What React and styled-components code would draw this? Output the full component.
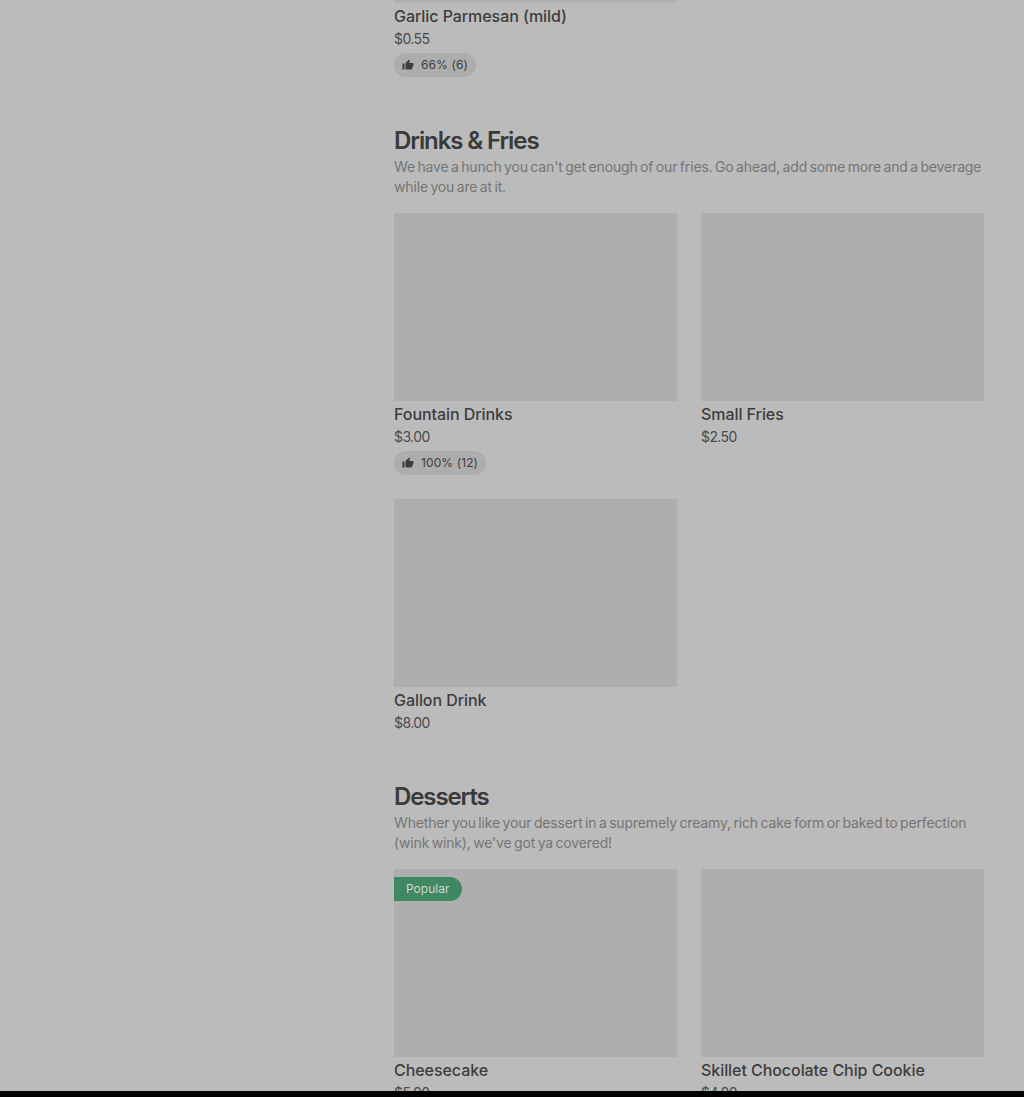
import React from "react";
import styled, { createGlobalStyle } from "styled-components";
import { MdThumbUp } from "react-icons/md";

const sections = [
  {
    title: "Drinks & Fries",
    text: "We have a hunch you can't get enough of our fries. Go ahead, add some more and a beverage while you are at it.",
    items: [
      { name: "Fountain Drinks", price: "$3.00", rating: "100% (12)" },
      { name: "Small Fries", price: "$2.50" },
      { name: "Gallon Drink", price: "$8.00" },
    ],
  },
  {
    title: "Desserts",
    text: "Whether you like your dessert in a supremely creamy, rich cake form or baked to perfection (wink wink), we've got ya covered!",
    items: [
      { name: "Cheesecake", price: "$5.00", popular: true },
      { name: "Skillet Chocolate Chip Cookie", price: "$4.00" },
    ],
  },
];

function Rating({ value }) {
  return (
    <RatingPill>
      <MdThumbUp size={12} />
      <span>{value}</span>
    </RatingPill>
  );
}

function MenuItem({ item }) {
  return (
    <Card>
      <Photo>{item.popular && <Badge>Popular</Badge>}</Photo>
      <Name>{item.name}</Name>
      <Price>{item.price}</Price>
      {item.rating && <Rating value={item.rating} />}
    </Card>
  );
}

export default function App() {
  return (
    <>
      <GlobalStyle />
      <Page>
        <Menu>
          <Card>
            <PhotoEdge />
            <Name>Garlic Parmesan (mild)</Name>
            <Price>$0.55</Price>
            <Rating value="66% (6)" />
          </Card>
          {sections.map((section) => (
            <Section key={section.title}>
              <Heading>{section.title}</Heading>
              <Description>{section.text}</Description>
              <Grid>
                {section.items.map((item) => (
                  <MenuItem key={item.name} item={item} />
                ))}
              </Grid>
            </Section>
          ))}
        </Menu>
      </Page>
      <BottomBar />
    </>
  );
}

const GlobalStyle = createGlobalStyle`
  html, body {
    margin: 0;
    height: 100%;
    overflow: hidden;
    background: #bbbbbb;
  }
  body {
    font-family: Inter, "Liberation Sans", sans-serif;
  }
`;

const Page = styled.main`
  height: 1091px;
  overflow: hidden;
  padding: 0 40px 0 394px;
  background: #bbbbbb;
`;

const Menu = styled.div`
  width: 590px;
`;

const BottomBar = styled.div`
  height: 6px;
  background: #000;
`;

const Section = styled.section`
  margin-top: 48px;
`;

const Heading = styled.h2`
  margin: 0;
  font-size: 24px;
  line-height: 32px;
  font-weight: 600;
  letter-spacing: -1.1px;
  color: #3a3a3a;
`;

const Description = styled.p`
  margin: 0 0 16px;
  font-size: 14px;
  line-height: 20px;
  letter-spacing: -0.15px;
  word-spacing: -1.3px;
  color: #757575;
`;

const Grid = styled.div`
  display: grid;
  grid-template-columns: 283px 283px;
  column-gap: 24px;
  row-gap: 24px;
`;

const Card = styled.article`
  display: flex;
  flex-direction: column;
  align-items: flex-start;
  min-width: 0;
`;

const Photo = styled.div`
  position: relative;
  width: 100%;
  height: 188px;
  background: #aeaeae;
`;

const PhotoEdge = styled.div`
  width: 283px;
  height: 1px;
  margin-bottom: 2px;
  background: #aeaeae;
  box-shadow: 0 1px 2px rgba(0, 0, 0, 0.12);
`;

const Badge = styled.span`
  position: absolute;
  top: 8px;
  left: 0;
  height: 24px;
  padding: 0 13px 0 12px;
  border-radius: 0 12px 12px 0;
  background: #3f8862;
  color: #cbd8d1;
  font-size: 12px;
  line-height: 24px;
`;

const Name = styled.h3`
  margin: 3px 0 0;
  font-size: 16px;
  line-height: 20px;
  font-weight: 500;
  letter-spacing: -0.06px;
  color: #3d3d3d;
`;

const Price = styled.div`
  margin-top: 3px;
  font-size: 14px;
  line-height: 20px;
  letter-spacing: -0.6px;
  color: #4a4a4a;
`;

const RatingPill = styled.div`
  display: inline-flex;
  align-items: center;
  gap: 7px;
  height: 24px;
  margin-top: 4px;
  padding: 0 8px;
  border-radius: 12px;
  background: #adadad;
  color: #3d3d3d;
  font-size: 12px;
  line-height: 16px;
  letter-spacing: 0.1px;
`;
